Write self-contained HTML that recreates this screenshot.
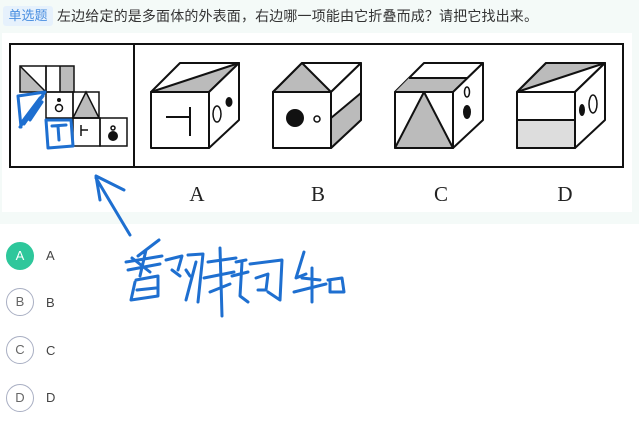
<!DOCTYPE html>
<html><head><meta charset="utf-8"><style>
html,body{margin:0;padding:0;width:639px;height:423px;overflow:hidden;background:#fff;font-family:"Liberation Sans","Noto Sans CJK SC",sans-serif;}
#q{position:absolute;left:0;top:0;width:639px;height:224px;background:#f4faf8;}
#tag{position:absolute;left:3px;top:6px;width:50px;height:20px;background:#e6f1fc;border-radius:3px;color:#4a8fe0;font-size:13px;line-height:20px;text-align:center;}
#t{position:absolute;left:57px;top:6px;font-size:14px;line-height:20px;color:#333;white-space:nowrap;letter-spacing:0.15px;}
#img{position:absolute;left:2px;top:33px;width:630px;height:179px;background:#fff;}
.opt{position:absolute;left:6px;width:28px;height:28px;border-radius:50%;border:1px solid #a9afc3;box-sizing:border-box;text-align:center;line-height:26px;font-size:13px;color:#666;}
.lab{position:absolute;left:46px;font-size:13px;color:#444;}
svg{position:absolute;left:0;top:0}
</style></head><body>
<div id="q"></div>
<div id="tag">单选题</div>
<div id="t">左边给定的是多面体的外表面，右边哪一项能由它折叠而成？请把它找出来。</div>
<div id="img"></div>
<div class="opt" style="top:242px;background:#2ec79b;border-color:#2ec79b;color:#fff">A</div><div class="lab" style="top:248px">A</div>
<div class="opt" style="top:288px">B</div><div class="lab" style="top:295px">B</div>
<div class="opt" style="top:336px">C</div><div class="lab" style="top:343px">C</div>
<div class="opt" style="top:384px">D</div><div class="lab" style="top:390px">D</div>
<svg width="639" height="423" viewBox="0 0 639 423">
<g stroke="#111" stroke-width="2" fill="none">
<rect x="10" y="44" width="613" height="123"/>
<line x1="134" y1="44" x2="134" y2="167"/>
</g>
<g stroke="#111" stroke-width="1.5" fill="none">
<polygon points="20,66 46,92 20,92" fill="#bbb" stroke="none"/>
<rect x="60" y="66" width="14" height="26" fill="#bbb" stroke="none"/>
<polygon points="86,92 73,118 99,118" fill="#bbb"/>
<rect x="20" y="66" width="26" height="26"/><rect x="46" y="66" width="28" height="26"/>
<line x1="20" y1="66" x2="46" y2="92"/><line x1="60" y1="66" x2="60" y2="92"/>
<rect x="46" y="92" width="27" height="26"/><rect x="73" y="92" width="26" height="26"/>
<rect x="73" y="118" width="27" height="28"/><rect x="100" y="118" width="27" height="28"/>
<circle cx="59" cy="108" r="3.5"/>
<line x1="81" y1="125" x2="81" y2="136"/><line x1="81" y1="130" x2="88" y2="130"/>
<circle cx="113" cy="128" r="2"/>
</g>
<circle cx="59" cy="100" r="2" fill="#111"/>
<circle cx="113" cy="136" r="5" fill="#111"/>
<g stroke="#111" stroke-width="2" fill="none" stroke-linejoin="round">
<polygon points="151,92 180,63 239,63 209,92" fill="#fff"/>
<polygon points="151,92 239,63 209,92" fill="#bbb"/>
<rect x="151" y="92" width="58" height="56"/>
<polygon points="209,92 239,63 239,120 209,148" fill="#fff"/>
<line x1="166" y1="117" x2="190" y2="117"/><line x1="190" y1="107" x2="190" y2="136"/>
<ellipse cx="217" cy="114" rx="4" ry="8" stroke-width="1.5"/>
<polygon points="273,92 302,63 361,63 331,92" fill="#fff"/>
<polygon points="273,92 302,63 331,92" fill="#bbb"/>
<rect x="273" y="92" width="58" height="56"/>
<polygon points="331,92 361,63 361,120 331,148" fill="#fff"/>
<polygon points="331,118 361,93 361,120 331,148" fill="#bbb"/>
<circle cx="317" cy="119" r="3" stroke-width="1.5"/>
<polygon points="395,92 424,63 483,63 453,92" fill="#fff"/>
<polygon points="395,92 409,78 467,78 453,92" fill="#bbb" stroke="none"/>
<line x1="409" y1="78" x2="467" y2="78"/>
<rect x="395" y="92" width="58" height="56"/>
<polygon points="395,148 424,92 453,148" fill="#bbb"/>
<polygon points="453,92 483,63 483,120 453,148" fill="#fff"/>
<ellipse cx="467" cy="92" rx="2.5" ry="5" stroke-width="1.5"/>
<polygon points="517,92 546,63 605,63 575,92" fill="#fff"/>
<polygon points="517,92 546,63 605,63" fill="#bbb" stroke="none"/>
<polygon points="517,92 546,63 605,63 575,92"/>
<line x1="517" y1="92" x2="605" y2="63"/>
<rect x="517" y="120" width="58" height="28" fill="#ddd"/>
<rect x="517" y="92" width="58" height="56"/>
<polygon points="575,92 605,63 605,120 575,148" fill="#fff"/>
<ellipse cx="593" cy="104" rx="4" ry="9" stroke-width="1.5"/>
</g>
<g fill="#111">
<ellipse cx="229" cy="102" rx="3.5" ry="5"/>
<circle cx="295" cy="118" r="9"/>
<ellipse cx="467" cy="112" rx="4" ry="7"/>
<ellipse cx="582" cy="110" rx="3" ry="6"/>
</g>
<g font-family="Liberation Serif,serif" font-size="21" fill="#222" text-anchor="middle">
<text x="197" y="201">A</text><text x="318" y="201">B</text><text x="441" y="201">C</text><text x="565" y="201">D</text>
</g>
<g stroke="#1e6fd0" stroke-width="3" fill="none" stroke-linecap="round" stroke-linejoin="round">
<path d="M20,127 L45,92 M22,122 L40,98 M26,118 L43,96 M18,96 L21,127 M18,96 L45,92 M24,124 L38,104 M30,120 L42,102"/>
<path d="M48,148 L46,120 L71,120 L73,146 L48,148 M52,126 L66,125 M58,126 L59,140"/>
<path d="M96,178 L130,235 M96,176 L124,190 M96,176 L100,200"/>
<path d="M159,240 L138,256 M126,262 L162,256 M146,250 L140,276 M128,270 L160,264 M135,282 L131,300 L158,296 L158,276 L136,280 M137,290 L156,288 M132,258 L150,272"/>
<path d="M166,260 L182,256 L178,270 M172,270 L180,276 M188,255 L203,254 L198,302 M186,270 L190,276 M196,262 L186,300"/>
<path d="M208,262 L236,258 M204,278 L234,272 M220,248 L222,316 M210,292 L230,284 M236,262 L246,260 M232,276 L248,272 M242,262 L240,296 L248,302"/>
<path d="M250,264 L282,260 L280,300 L268,292 M256,278 L268,274 L266,290 L258,290"/>
<path d="M304,252 L296,278 L306,274 M294,292 L326,284 M312,268 L312,302 M302,278 L320,280 M328,280 L342,278 L344,292 L330,292 L330,280"/>
</g>
</svg>
</body></html>
